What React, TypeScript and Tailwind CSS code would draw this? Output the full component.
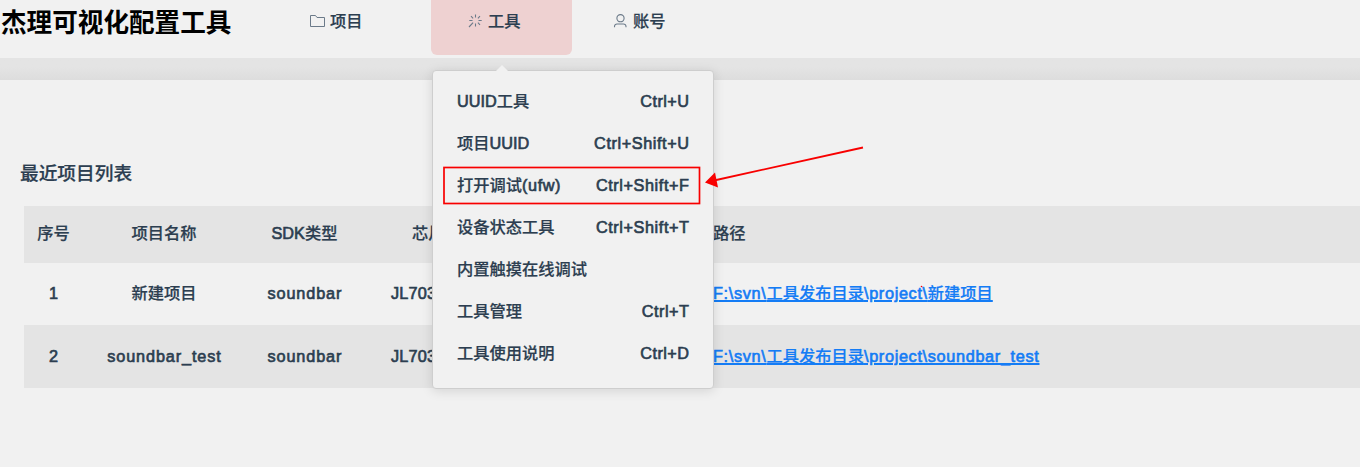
import React from "react";

const menuItems = [
  { label: "UUID工具", keys: "Ctrl+U", height: "h-[42px]", tracking: "tracking-[0.45px] -mr-[0.45px]" },
  { label: "项目UUID", keys: "Ctrl+Shift+U", height: "h-[42px]", tracking: "tracking-[0.58px] -mr-[0.58px]" },
  { label: "打开调试(ufw)", keys: "Ctrl+Shift+F", height: "h-[42px]", tracking: "tracking-[0.58px] -mr-[0.58px]" },
  { label: "设备状态工具", keys: "Ctrl+Shift+T", height: "h-[42px]", tracking: "tracking-[0.58px] -mr-[0.58px]" },
  { label: "内置触摸在线调试", keys: "", height: "h-[42px]", tracking: "" },
  { label: "工具管理", keys: "Ctrl+T", height: "h-[42px]", tracking: "tracking-[0.5px] -mr-[0.5px]" },
  { label: "工具使用说明", keys: "Ctrl+D", height: "h-[41px]", tracking: "tracking-[0.45px] -mr-[0.45px]" },
];

const rows = [
  { cells: ["序号", "项目名称", "SDK类型", "芯片"], path: "路径", style: "h-[57px] bg-[#e4e4e4] pb-[3px]", link: false },
  { cells: ["1", "新建项目", "soundbar", "JL703"], path: "F:\\svn\\工具发布目录\\project\\新建项目", style: "h-[62px] pb-[2px]", link: true },
  { cells: ["2", "soundbar_test", "soundbar", "JL703"], path: "F:\\svn\\工具发布目录\\project\\soundbar_test", style: "h-[63px] bg-[#e4e4e4] pb-[2px]", link: true },
];

function FolderIcon() {
  return (
    <svg width="16" height="14" viewBox="0 0 16 14" fill="none" stroke="#6b7a89" strokeWidth="1">
      <path d="M.5 1.5h5l1.5 2h7.5v9H.5z" />
    </svg>
  );
}

function LoadingIcon() {
  return (
    <svg width="15" height="15" viewBox="0 0 15 15" fill="none" stroke="#6b7a89" strokeWidth="1.1">
      <path d="M7.5 .5v3M7.5 9.5v3M1.3 6.5h3.2M10.5 6.5h3.2M3 2.2l2.1 2.1M12 2.2L9.9 4.3M9.9 8.7l2.1 2.1M5.1 8.7L1 13" />
    </svg>
  );
}

function UserIcon() {
  return (
    <svg width="14" height="15" viewBox="0 0 14 15" fill="none" stroke="#6b7a89" strokeWidth="1.1">
      <circle cx="7.5" cy="4.2" r="3.6" />
      <path d="M1.5 13.3v-.8a2.5 2.5 0 0 1 2.5-2.5h6.5a2.5 2.5 0 0 1 2.5 2.5v.8" />
    </svg>
  );
}

/* Latin runs are drawn slightly heavier than the Chinese ones beside them. */
function Mixed({ text, spacing = "" }: { text: string; spacing?: string }) {
  const runs = text.match(/[\u4e00-\u9fff]+|[^\u4e00-\u9fff]+/g) ?? [];
  return (
    <>
      {runs.map((run, i) =>
        /[\u4e00-\u9fff]/.test(run) ? (
          <React.Fragment key={i}>{run}</React.Fragment>
        ) : (
          <span key={i} className={"[-webkit-text-stroke:0.65px_currentColor] " + spacing}>
            {run}
          </span>
        ),
      )}
    </>
  );
}

function cellSpacing(text: string) {
  if (/[a-z]/.test(text)) return "tracking-[0.88px] -mr-[0.88px]";
  return text.startsWith("JL") ? "tracking-[0.2px]" : "";
}

export default function App() {
  return (
    <div className="relative h-[467px] w-[1360px] overflow-hidden bg-[#f1f1f1] font-['Liberation_Sans','Noto_Sans_CJK_SC',sans-serif] text-[16.25px] leading-6 font-medium whitespace-nowrap text-[#2c3e50] [-webkit-text-stroke:0.2px_currentColor]">
      <header className="flex h-[58px] items-start">
        <h1 className="w-[310px] pt-[5px] pl-px text-[25.6px] leading-9 font-bold text-black [-webkit-text-stroke:0px]">杰理可视化配置工具</h1>
        <nav className="flex">
          <div className="flex w-[121px] items-start gap-[4px] pt-[9px]">
            <span className="pt-[5px]"><FolderIcon /></span>
            <span>项目</span>
          </div>
          <div className="flex h-[55px] w-[141px] items-start gap-[5px] rounded-b-md bg-[#eed1d1] pt-[9px] pl-[37px]">
            <span className="pt-[5px]"><LoadingIcon /></span>
            <span>工具</span>
          </div>
          <div className="flex items-start gap-[6px] pt-[9px] pl-[41px]">
            <span className="pt-[5px]"><UserIcon /></span>
            <span>账号</span>
          </div>
        </nav>
      </header>
      <div className="h-[22px] bg-linear-to-b from-[#e4e4e4] from-40% to-[#dddddd]" />

      <main className="pt-[82px]">
        <h2 className="pl-5 text-[18.7px] leading-6">最近项目列表</h2>
        <div className="mt-5 ml-6">
          {rows.map((row) => (
            <div key={row.cells[0]} className={"grid grid-cols-[59px_162px_119px_73px_1fr] items-center text-center " + row.style}>
              {row.cells.slice(0, 3).map((cell) => (
                <div key={cell}><Mixed text={cell} spacing={cellSpacing(cell)} /></div>
              ))}
              <div className={row.link ? "pl-[27px] text-left" : "pl-[48px] text-left"}>
                <Mixed text={row.cells[3]} spacing={cellSpacing(row.cells[3])} />
              </div>
              <div className="pl-[276px] text-left">
                <span className={row.link ? "text-[#147cf5] underline decoration-[1.5px]" : ""}>
                  <Mixed text={row.path} spacing="tracking-[0.67px]" />
                </span>
              </div>
            </div>
          ))}
        </div>
      </main>

      <div className="absolute top-[70px] left-[432px] h-[319px] w-[282px] rounded-[4px] border border-[#cecece] bg-[#f1f1f1] px-6 pt-[9px] shadow-[0_2px_12px_rgba(0,0,0,0.12)]">
        <svg className="absolute -top-[7px] left-[61px]" width="16" height="8" viewBox="0 0 16 8">
          <path d="M1 8L8 1l7 7z" fill="#f1f1f1" />
        </svg>
        {menuItems.map((item) => (
          <div key={item.label} className={"flex items-center justify-between " + item.height}>
            <span><Mixed text={item.label} spacing={item.label.includes("ufw") ? "tracking-[0.6px]" : ""} /></span>
            <span><Mixed text={item.keys} spacing={item.tracking} /></span>
          </div>
        ))}
      </div>

      <svg className="absolute top-0 left-0" width="1360" height="467" viewBox="0 0 1360 467">
        <rect x="444" y="167.5" width="255.5" height="36" fill="none" stroke="#f80000" strokeWidth="1.7" />
        <path d="M863 147.5L714 180.5" stroke="#f80000" strokeWidth="1.8" />
        <path d="M705 182.5L715 172.5l3 15z" fill="#f80000" />
        <circle cx="921.5" cy="286.5" r="0.8" fill="#f80000" />
      </svg>
    </div>
  );
}
